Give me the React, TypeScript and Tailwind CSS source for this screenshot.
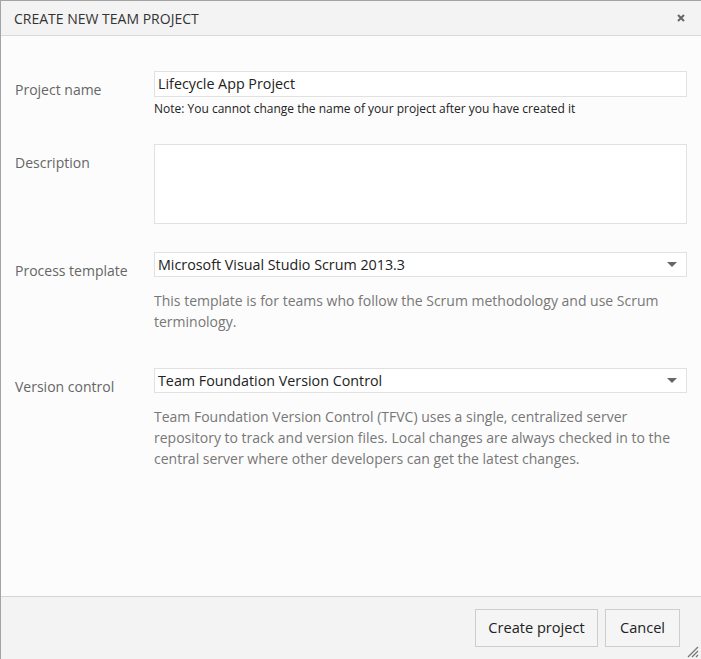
const font = { fontFamily: '"Open Sans", "Noto Sans", sans-serif' }

export default function App() {
  return (
    <div
      className="w-[701px] h-[659px] flex flex-col border-l border-t border-[#a3a3a3] bg-[#fcfcfc] text-[#222] overflow-hidden"
      style={font}
    >
      {/* 标题栏 */}
      <div className="h-[35px] shrink-0 flex items-center justify-between pl-[13px] pr-[16px] bg-[#f3f3f3] border-b border-[#dadada]">
        <span className="text-[14px] text-[#333]">CREATE NEW TEAM PROJECT</span>
        <svg width="8" height="8" viewBox="0 0 8 8">
          <path d="M1 1 L7 7 M7 1 L1 7" stroke="#666" strokeWidth="2" />
        </svg>
      </div>

      {/* 表单 */}
      <div className="flex-1 pt-[35px] pr-[14px]">
        <Row label="Project name">
          <div className="h-[26px] bg-white border border-[#e1e1e1] flex items-center px-[3px] text-[14.3px]">
            Lifecycle App Project
          </div>
          <p className="mt-[4px] text-[12px] leading-[16px] text-[#222]">
            Note: You cannot change the name of your project after you have created it
          </p>
        </Row>

        <Row label="Description" className="mt-[27px]">
          <div className="h-[80px] bg-white border border-[#e1e1e1]" />
        </Row>

        <Row label="Process template" className="mt-[28px]">
          <Select value="Microsoft Visual Studio Scrum 2013.3" />
          <p className="mt-[13px] text-[14px] leading-[21px] text-[#777]">
            This template is for teams who follow the Scrum methodology and use Scrum terminology.
          </p>
        </Row>

        <Row label="Version control" className="mt-[36px]">
          <Select value="Team Foundation Version Control" />
          <p className="mt-[13px] text-[14px] leading-[21px] text-[#777]">
            Team Foundation Version Control (TFVC) uses a single, centralized server repository to track
            and version files. Local changes are always checked in to the central server where other
            developers can get the latest changes.
          </p>
        </Row>
      </div>

      {/* 底部按钮 */}
      <div className="h-[63px] shrink-0 relative flex items-start justify-end gap-[7px] pt-[12px] pr-[21px] bg-[#f3f3f3] border-t border-[#d6d6d6]">
        <button className="h-[38px] w-[123px] bg-[#f5f5f5] border border-[#cdcdcd] text-[14.6px] text-[#222]">
          Create project
        </button>
        <button className="h-[38px] w-[75px] bg-[#f5f5f5] border border-[#cdcdcd] text-[14.6px] text-[#222]">
          Cancel
        </button>
        <svg className="absolute right-[2px] bottom-[1px]" width="14" height="14" viewBox="0 0 14 14">
          <path d="M13 3 L3 13 M13 7 L7 13 M13 11 L11 13" stroke="#777" strokeWidth="1.3" />
        </svg>
      </div>
    </div>
  )
}

function Row({ label, className = '', children }: { label: string; className?: string; children: React.ReactNode }) {
  return (
    <div className={`flex ${className}`}>
      <div className="w-[153px] shrink-0 pl-[14px] pt-[8px] text-[14px] leading-[21px] text-[#666]">{label}</div>
      <div className="flex-1">{children}</div>
    </div>
  )
}

function Select({ value }: { value: string }) {
  return (
    <div className="h-[25px] bg-white border border-[#e1e1e1] flex items-center justify-between pl-[3px] pr-[9px] text-[14.3px]">
      <span>{value}</span>
      <svg width="10" height="5" viewBox="0 0 10 5">
        <path d="M0 0 H10 L5 5 Z" fill="#666" />
      </svg>
    </div>
  )
}
